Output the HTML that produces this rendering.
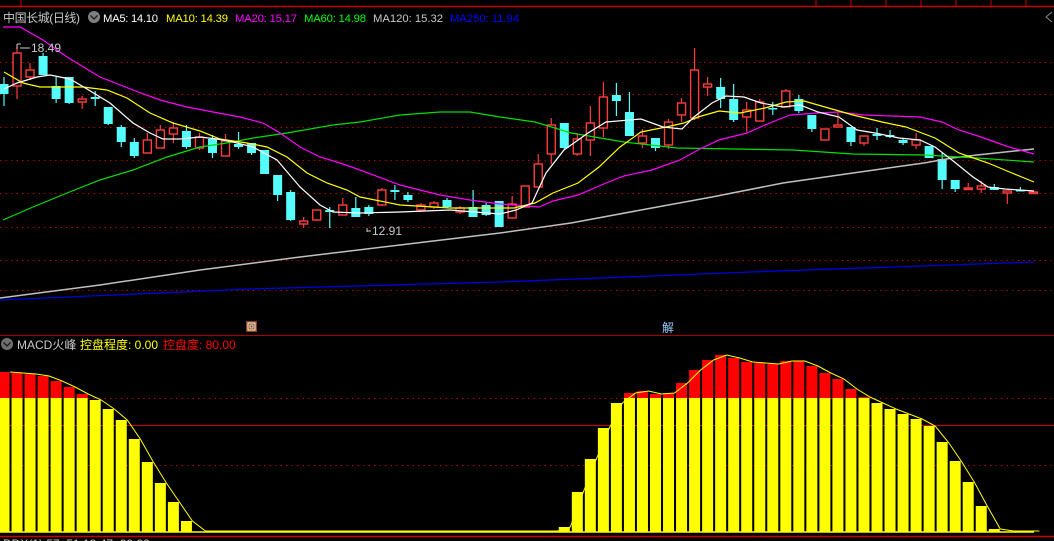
<!DOCTYPE html>
<html><head><meta charset="utf-8"><style>
html,body{margin:0;padding:0;background:#000;width:1054px;height:541px;overflow:hidden}
svg{display:block}
text{font-family:"Liberation Sans","Noto Sans CJK SC",sans-serif;font-size:12px}
.t{font-size:11.3px}
</style></head><body>
<svg id="s" width="1054" height="541" viewBox="0 0 1054 541" xmlns="http://www.w3.org/2000/svg">
<rect width="1054" height="541" fill="#000"/>
<line x1="0" y1="6.5" x2="1054" y2="6.5" stroke="#c00" stroke-width="1.5"/>
<g stroke="#c00" stroke-width="1"><line x1="21" y1="0" x2="21" y2="6"/><line x1="816" y1="0" x2="816" y2="6"/><line x1="851" y1="0" x2="851" y2="6"/><line x1="886" y1="0" x2="886" y2="6"/><line x1="921" y1="0" x2="921" y2="6"/><line x1="956" y1="0" x2="956" y2="6"/><line x1="991" y1="0" x2="991" y2="6"/><line x1="1026" y1="0" x2="1026" y2="6"/></g>
<g id="g"></g>
<text x="3" y="22" fill="#c8c8c8" textLength="77">中国长城(日线)</text>
<circle cx="94" cy="17" r="6" fill="#808080"/><path d="M90.5 15.5 L94 19 L97.5 15.5" stroke="#222" stroke-width="1.5" fill="none"/>
<text class="t" x="103" y="22" fill="#fff" textLength="55">MA5: 14.10</text>
<text class="t" x="166" y="22" fill="#ff0" textLength="62">MA10: 14.39</text>
<text class="t" x="235" y="22" fill="#f0f" textLength="62">MA20: 15.17</text>
<text class="t" x="304" y="22" fill="#0f0" textLength="62">MA60: 14.98</text>
<text class="t" x="373" y="22" fill="#c8c8c8" textLength="70">MA120: 15.32</text>
<text class="t" x="450" y="22" fill="#0000ff" textLength="69">MA250: 11.94</text>
<path d="M1052 12 L1046 17 L1052 22" stroke="#888" fill="none"/>
<text x="31" y="52" fill="#c8c8c8">18.49</text><path d="M17 44 L17 49 M17 44 L21 44 M20 48 L30 48" stroke="#c8c8c8" fill="none"/>
<text x="372" y="235" fill="#c8c8c8">12.91</text><path d="M367 228 L367 232 M367 231 L371 231" stroke="#c8c8c8" fill="none"/>
<rect x="246" y="321" width="11" height="11" fill="#8b4513"/><rect x="248" y="323" width="7" height="7" fill="none" stroke="#fff"/><rect x="250" y="325" width="3" height="3" fill="none" stroke="#fff" stroke-width="0.8"/>
<text x="662" y="332" fill="#9cf" font-size="12">解</text>
<line x1="0" y1="335.5" x2="1054" y2="335.5" stroke="#a00" stroke-width="1"/>
<circle cx="7" cy="344" r="6" fill="#707070"/><path d="M3.5 342.5 L7 346 L10.5 342.5" stroke="#222" stroke-width="1.5" fill="none"/>
<text x="17" y="349" fill="#c8c8c8">MACD火峰</text>
<text x="80" y="349" fill="#ff0">控盘程度: 0.00</text>
<text x="163" y="349" fill="#f00">控盘度: 80.00</text>
<line x1="0" y1="536.5" x2="1054" y2="536.5" stroke="#c00" stroke-width="1.5"/>
<text x="3" y="548" fill="#c8c8c8">DDX(1) 57: 51.19 47: 20.00</text>
</svg>
<script>
var g=document.getElementById('g'),h='';
function X(i){return 4+13.03*i;}
[62,94,127,160,193,227,260,290].forEach(function(y){h+='<line x1="0" y1="'+(y+.5)+'" x2="1054" y2="'+(y+.5)+'" stroke="#a00" stroke-dasharray="1.5,4"/>';});
[398,465].forEach(function(y){h+='<line x1="0" y1="'+(y+.5)+'" x2="1054" y2="'+(y+.5)+'" stroke="#a00" stroke-dasharray="1.5,4"/>';});
h+='<line x1="0" y1="425.5" x2="1054" y2="425.5" stroke="#c00"/>';
var C=[[0,84,94,77,106],[1,53,86,46,99],[1,70,77,63,80],[0,56,75,53,75],[0,86,99,77,103],[0,77,103,77,104],[1,99,102,96,109],[0,97,99,91,106],[0,107,124,107,125],[0,127,142,125,147],[0,142,156,138,158],[1,140,153,133,153],[1,130,148,125,148],[1,128,134,122,143],[0,131,147,125,149],[1,137,148,133,150],[0,139,153,135,158],[1,141,156,134,156],[0,144,147,132,149],[0,143,153,143,155],[0,150,174,150,174],[0,175,195,175,201],[0,192,220,190,221],[1,221,224,217,228],[1,210,220,210,221],[0,210,212,207,228],[1,205,215,198,215],[0,208,217,197,217],[0,207,214,205,216],[1,190,205,188,206],[0,190,192,185,200],[0,195,200,192,202],[1,205,210,203,212],[1,203,207,201,209],[0,200,207,198,208],[1,208,212,206,214],[0,207,217,190,217],[0,205,215,203,216],[0,201,227,201,227],[1,204,218,196,219],[1,186,207,186,207],[1,164,187,154,187],[1,125,154,118,164],[0,123,148,123,150],[1,139,154,133,156],[1,123,140,106,156],[1,97,128,82,137],[0,95,101,83,116],[0,112,136,92,136],[1,136,143,129,148],[0,138,148,138,151],[1,122,145,119,149],[1,103,115,98,122],[1,70,118,48,120],[1,84,87,77,96],[0,87,99,78,108],[0,99,120,84,122],[1,110,117,102,132],[1,102,121,99,121],[0,108,109,102,115],[1,91,107,89,107],[0,99,111,95,113],[0,115,129,115,132],[1,129,140,129,140],[1,125,127,113,127],[0,127,142,127,146],[1,136,143,136,146],[0,134,136,128,140],[0,135,137,130,138],[0,140,143,138,145],[1,140,145,133,149],[0,146,158,146,158],[0,159,180,153,189],[0,180,189,180,192],[1,188,189,183,189],[1,186,189,181,193],[0,187,190,184,190],[1,191,193,191,204],[0,190,191,187,191],[1,192,193,192,193]];
C.forEach(function(c,i){var x=X(i),col=c[0]?'#ff3c3c':'#54fcfc';
h+='<line x1="'+x+'" y1="'+c[3]+'" x2="'+x+'" y2="'+c[4]+'" stroke="'+col+'" stroke-width="1.2"/>';
var bh=Math.max(c[2]-c[1],1.5);
if(c[0])h+='<rect x="'+(x-4)+'" y="'+c[1]+'" width="8" height="'+bh+'" fill="#000" stroke="'+col+'" stroke-width="1.4"/>';
else h+='<rect x="'+(x-4.5)+'" y="'+c[1]+'" width="9" height="'+bh+'" fill="'+col+'"/>';});
function pl(p,col,w){h+='<polyline fill="none" stroke="'+col+'" stroke-width="'+(w||1.2)+'" points="'+p+'"/>';}
pl('0,300 250,289 500,282 750,272 1034,262','#0000e0',1.3);
pl('0,298 100,285 200,270 300,257 400,245 500,233 571,223 641,210 712,197 783,183 853,173 924,163 952,158 977,155 1034,149','#c0c0c0',1.5);
pl('3,220 33,207 67,193 100,180 133,170 167,157 200,147 233,142 253,138 287,133 333,125 360,122 400,115 440,112 470,112 500,117 535,122 571,133 624,142 677,148 793,150 853,154 924,155 977,158 1034,162','#00e000');
pl('3,27 20,27 43,40 67,57 100,77 133,90 160,100 187,107 213,112 240,117 263,123 280,133 300,147 320,157 340,163 360,170 400,185 440,195 470,200 500,204 539,207 553,201 578,195 606,183 624,176 652,170 680,160 698,150 719,140 747,133 765,125 790,115 818,113 839,112 864,115 920,117 942,122 959,130 981,137 1009,147 1034,154','#ff00ff');
pl('4,72 23,83 40,87 83,87 107,90 127,98 150,113 173,123 200,131 220,139 247,143 267,147 287,157 307,173 327,183 347,190 360,197 400,205 450,208 500,208 514,208 535,203 553,193 578,183 599,167 620,147 641,132 666,127 684,123 698,117 719,111 740,113 765,108 786,102 804,101 825,107 853,115 882,122 906,127 935,138 959,153 988,163 1012,173 1034,182','#ffff00');
pl('4,89 17,83 37,77 50,75 70,79 87,89 110,103 133,123 150,133 163,139 180,139 200,137 217,139 233,142 253,147 277,160 300,187 320,205 333,212 360,213 400,212 450,210 500,214 516,210 532,203 546,173 564,150 588,133 606,122 641,119 663,127 682,129 694,117 712,103 726,96 744,97 761,103 783,107 800,105 818,112 839,117 857,130 875,133 899,138 920,140 935,147 952,160 973,177 988,187 1005,189 1034,191','#ffffff');
var B=[];for(var i=0;i<80;i++)B[i]=0;
[372,373,374,376,381,387,394,400,409,420,439,462,483,502,521].forEach(function(v,i){B[i]=v;});
[527,492,459,428,403,393,391,394,393,383,370,360,355,358,362,363,364,361,361,366,373,379,389,397,403,409,414,419,426,442,461,482,506,529].forEach(function(v,i){B[43+i]=v;});
var base=532,pts=[];
B.forEach(function(t,i){var x=X(i);if(t){
h+='<rect x="'+(x-5.5)+'" y="'+Math.max(t,398)+'" width="11" height="'+(base-Math.max(t,398))+'" fill="#ffff00"/>';
if(t<398)h+='<rect x="'+(x-5.5)+'" y="'+t+'" width="11" height="'+(398-t)+'" fill="#ff0000"/>';
pts.push((x+6)+','+t);}else pts.push((x+6)+','+(base-1));});
pl(pts.join(' '),'#ffff00',1);
h+='<line x1="0" y1="532" x2="1034" y2="532" stroke="#ff0" stroke-width="1.5"/>';
g.innerHTML=h;
</script>
</body></html>
